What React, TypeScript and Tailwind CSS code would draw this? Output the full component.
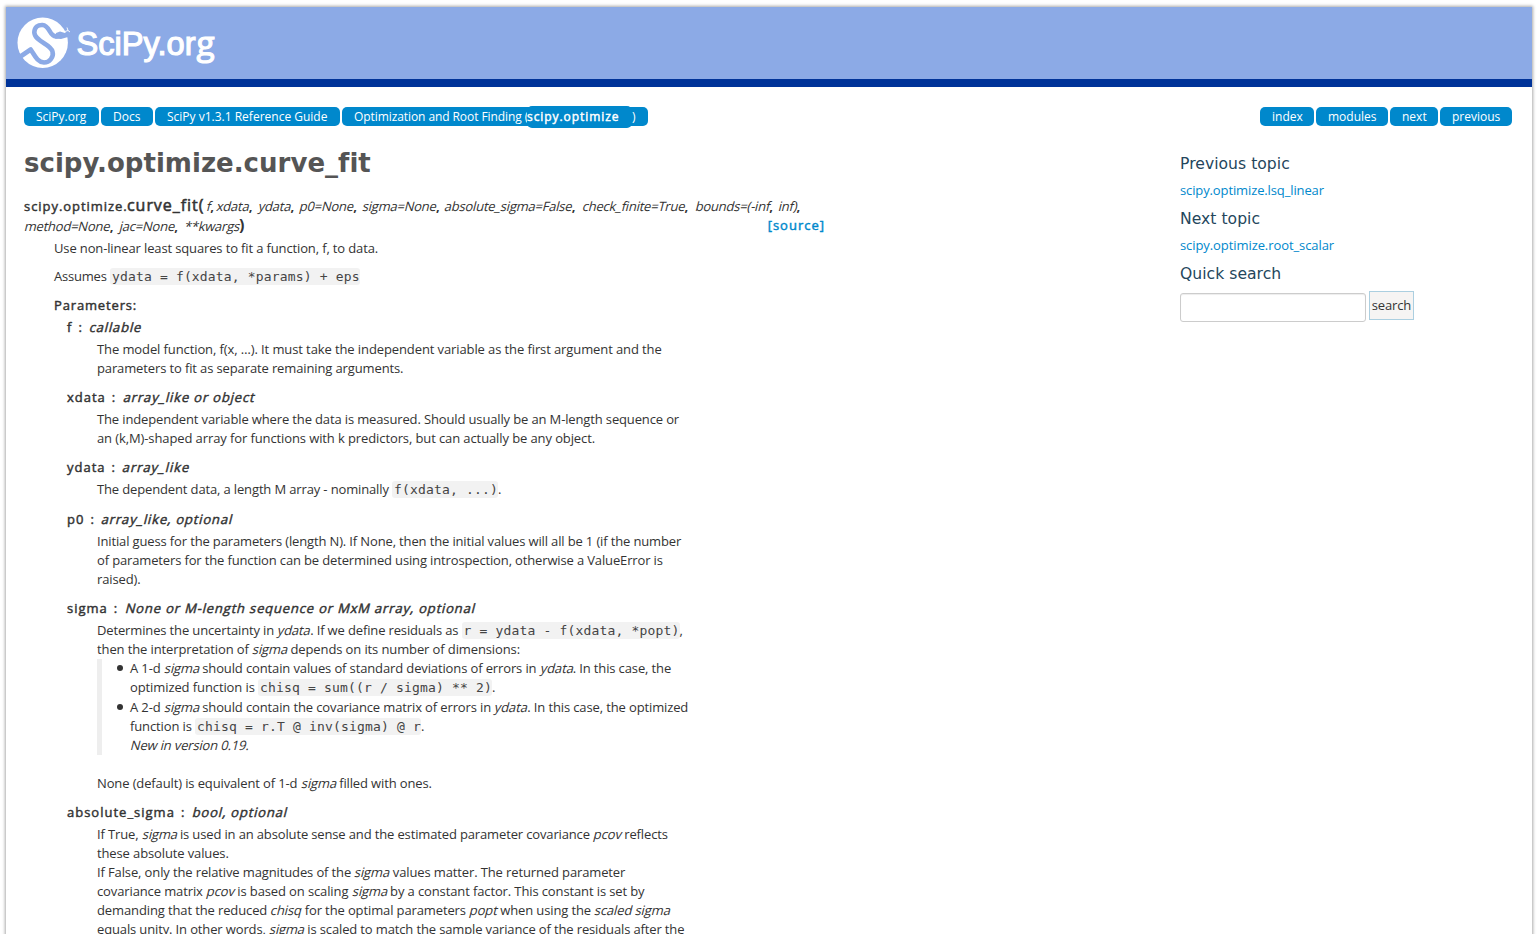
import React from "react";

const C = ({ children }: { children: React.ReactNode }) => (
  <code className="rounded-[3px] bg-[#f2f2f2] py-px pl-[2px] font-['DejaVu_Sans_Mono',monospace] text-[13px] tracking-[0.17px] text-[#444]">{children}</code>
);

const I = ({ children }: { children: React.ReactNode }) => (
  <em className="inline-block origin-[0_70%] -skew-x-[14deg] whitespace-pre not-italic">{children}</em>
);

const L = ({ children, s = -0.125 }: { children: React.ReactNode; s?: number }) => (
  <span className="block h-[19px] whitespace-nowrap" style={{ letterSpacing: `${s}px` }}>{children}</span>
);

const Term = ({ name, type, s = 0.83 }: { name: string; type: string; s?: number }) => (
  <dt className="h-[23px] whitespace-pre pl-[13px] leading-[20px] tracking-[1px] [-webkit-text-stroke:0.45px_#333]">
    {name}
    <span className="pl-[6px]">: </span>
    <span className="pl-[2px]" style={{ letterSpacing: `${s}px` }}><I>{type}</I></span>
  </dt>
);

const Pill = ({ children, w }: { children: React.ReactNode; w: number }) => (
  <li className="h-[19px] whitespace-nowrap rounded-[5px] bg-[#0088cc] pl-3 text-[12px] leading-[19px] text-white" style={{ width: w }}>{children}</li>
);

const Param = ({ children, w, comma = true }: { children: React.ReactNode; w: number; comma?: boolean }) => (
  <span className="inline-block whitespace-nowrap tracking-[-0.22px]" style={{ width: w }}>
    <I>{children}</I>
    {comma && <b>,</b>}
  </span>
);

const H3 = ({ children }: { children: React.ReactNode }) => (
  <h3 className="font-['DejaVu_Sans',sans-serif] text-[15.6px] leading-[20px] tracking-[0.03px] text-[#24465c]">{children}</h3>
);

const Item = ({ children }: { children: React.ReactNode }) => (
  <li className="mb-px flex">
    <span className="mr-[7px] mt-[6px] size-[6px] shrink-0 rounded-full bg-[#333]" />
    <div>{children}</div>
  </li>
);

function Logo() {
  return (
    <svg width="220" height="72" viewBox="0 0 220 72" aria-label="SciPy.org">
      <circle cx="36.700" cy="35.700" r="25.200" fill="#fff" />
      <path d="M13 50.500 L24.700 42.500 C28.500 48 31 55 38 55.500 C43.500 55.500 48 50 46.500 44.500 C44.500 36.500 28.500 34.500 28.300 25.300 C28.500 20 32 17.800 36.500 18 C44 18.500 43 29 50 29.500 L54 28.500" fill="none" stroke="#8caae6" strokeWidth="4.600" strokeLinejoin="round" />
      <path d="M50 26 L54 24.500 L59 26 L63 23 L62 30 L55 32 L49 31.500 Z" fill="#8caae6" />
      <path d="M59 24.500 L62 23.500 M62 23.500 L61 20.500 M62 23.500 L64 25" fill="none" stroke="#fff" strokeWidth="0.900" />
      <g fill="#fff" stroke="#fff" fontFamily="Liberation Sans, sans-serif">
        <text x="70.500" y="48" fontSize="34" strokeWidth="1.200" textLength="119" lengthAdjust="spacingAndGlyphs">SciPy.or</text>
        <text x="190.500" y="48" fontSize="33.500" strokeWidth="1.100" fontFamily="Open Sans, sans-serif">g</text>
      </g>
    </svg>
  );
}

export default function App() {
  return (
    <div className="h-[934px] overflow-hidden bg-white pl-[6px] pr-[8px] pt-[7px] font-['Open_Sans',sans-serif] text-[13px] leading-[19px] text-[#333]">
      <div className="h-[960px] bg-white shadow-[0_0_3px_1px_#aaa]">
        <header className="h-[80px] border-b-8 border-[#003399] bg-[#8caae6]"><Logo /></header>
        <div className="flex justify-between pl-[18px] pr-[20px] pt-[20px]">
          <ul className="flex gap-[2px]">
            <Pill w={75}>SciPy.org</Pill>
            <Pill w={52}>Docs</Pill>
            <Pill w={185}>SciPy v1.3.1 Reference Guide</Pill>
            <Pill w={306}><span className="inline-block w-[173px] tracking-[-0.08px]">Optimization and Root Finding (</span><span className="-my-px inline-block h-[22px] w-[105px] rounded-[5px] bg-[#0088cc] align-top leading-[21px] tracking-[0.93px] [-webkit-text-stroke:0.45px_white]">scipy.optimize</span>)</Pill>
          </ul>
          <ul className="flex gap-[2px]">
            <Pill w={54}>index</Pill><Pill w={72}>modules</Pill><Pill w={48}>next</Pill><Pill w={72}>previous</Pill>
          </ul>
        </div>
        <div className="flex pl-[18px]">
          <main className="w-[1156px]">
            <h1 className="mt-[17px] h-[40px] font-['DejaVu_Sans',sans-serif] text-[26px] font-bold leading-[40px] tracking-[0.02px] text-[#555]">scipy.optimize.curve_fit</h1>
            <div className="mt-[13px] h-[43px] w-[801px] leading-[20px]">
              <div className="flex h-[20px]">
                <span className="w-[103px] tracking-[0.95px] [-webkit-text-stroke:0.45px_#333]">scipy.optimize.</span>
                <span className="w-[79px] text-[16px] leading-[18px] tracking-[0.95px] [-webkit-text-stroke:0.55px_#333]">curve_fit(</span>
                <Param w={10}>f</Param><Param w={42}>xdata</Param><Param w={41}>ydata</Param><Param w={63}>p0=None</Param><Param w={82}>sigma=None</Param><Param w={138}>absolute_sigma=False</Param><Param w={113}>check_finite=True</Param><Param w={83}>bounds=(-inf</Param><Param w={30}>inf)</Param>
              </div>
              <div className="flex h-[20px]">
                <Param w={95}>method=None</Param><Param w={65}>jac=None</Param><Param w={55} comma={false}>**kwargs</Param><b className="text-[16px] leading-[18px]">)</b>
                <a className="-mt-px ml-auto tracking-[1px] text-[#0088cc] [-webkit-text-stroke:0.45px_#0088cc]">[source]</a>
              </div>
            </div>
            <div className="pl-[30px]">
              <L s={-0.136}>Use non-linear least squares to fit a function, f, to data.</L>
              <div className="mt-[9px]"><L s={-0.2}>Assumes <C>ydata = f(xdata, *params) + eps</C></L></div>
              <div className="mt-[10px] h-[21px] tracking-[0.85px] [-webkit-text-stroke:0.45px_#333]">Parameters:</div>
              <dl>
                <Term name="f" type="callable" />
                <dd className="mb-[9px] pl-[43px]"><L s={-0.103}>The model function, f(x, …). It must take the independent variable as the first argument and the</L><L>parameters to fit as separate remaining arguments.</L></dd>
                <Term name="xdata" type="array_like or object" />
                <dd className="mb-[9px] pl-[43px]"><L s={-0.137}>The independent variable where the data is measured. Should usually be an M-length sequence or</L><L s={-0.105}>an (k,M)-shaped array for functions with k predictors, but can actually be any object.</L></dd>
                <Term name="ydata" type="array_like" s={0.95} />
                <dd className="mb-[10px] pl-[43px]"><L s={-0.14}>The dependent data, a length M array - nominally <C>f(xdata, ...)</C>.</L></dd>
                <Term name="p0" type="array_like, optional" />
                <dd className="mb-[9px] pl-[43px]"><L s={-0.14}>Initial guess for the parameters (length N). If None, then the initial values will all be 1 (if the number</L><L s={-0.143}>of parameters for the function can be determined using introspection, otherwise a ValueError is</L><L>raised).</L></dd>
                <Term name="sigma" type="None or M-length sequence or MxM array, optional" />
                <dd className="mb-[9px] pl-[43px]">
                  <L s={-0.14}>Determines the uncertainty in <I>ydata</I>. If we define residuals as <C>r = ydata - f(xdata, *popt)</C>,</L>
                  <L s={-0.115}>then the interpretation of <I>sigma</I> depends on its number of dimensions:</L>
                  <ul className="mb-[19px] h-[96px] border-l-[5px] border-[#eee] pl-[15px]">
                    <Item><L>A 1-d <I>sigma</I> should contain values of standard deviations of errors in <I>ydata</I>. In this case, the</L><L s={-0.1}>optimized function is <C>chisq = sum((r / sigma) ** 2)</C>.</L></Item>
                    <Item><L>A 2-d <I>sigma</I> should contain the covariance matrix of errors in <I>ydata</I>. In this case, the optimized</L><L>function is <C>chisq = r.T @ inv(sigma) @ r</C>.</L><L s={-0.17}><I>New in version 0.19.</I></L></Item>
                  </ul>
                  <L>None (default) is equivalent of 1-d <I>sigma</I> filled with ones.</L>
                </dd>
                <Term name="absolute_sigma" type="bool, optional" />
                <dd className="pl-[43px]">
                  <L s={-0.142}>If True, <I>sigma</I> is used in an absolute sense and the estimated parameter covariance <I>pcov</I> reflects</L><L>these absolute values.</L>
                  <L>If False, only the relative magnitudes of the <I>sigma</I> values matter. The returned parameter</L>
                  <L s={-0.118}>covariance matrix <I>pcov</I> is based on scaling <I>sigma</I> by a constant factor. This constant is set by</L>
                  <L s={-0.12}>demanding that the reduced <I>chisq</I> for the optimal parameters <I>popt</I> when using the <I>scaled sigma</I></L>
                  <L s={-0.135}>equals unity. In other words, <I>sigma</I> is scaled to match the sample variance of the residuals after the</L>
                </dd>
              </dl>
            </div>
          </main>
          <aside className="pt-[28px]">
            <H3>Previous topic</H3>
            <p className="mb-[9px] mt-[7px] tracking-[-0.12px] text-[#0088cc]">scipy.optimize.lsq_linear</p>
            <H3>Next topic</H3>
            <p className="mb-[9px] mt-[7px] tracking-[-0.08px] text-[#0088cc]">scipy.optimize.root_scalar</p>
            <H3>Quick search</H3>
            <form className="mt-[7px] flex gap-[3px]">
              <input className="mt-[2px] h-[29px] w-[186px] rounded-[3px] border border-[#ccc] shadow-[inset_0_1px_1px_rgba(0,0,0,0.075)]" />
              <button type="button" className="h-[29px] w-[45px] border border-[#accfe0] bg-[#f6f4f3] text-[13px] tracking-[-0.15px]">search</button>
            </form>
          </aside>
        </div>
      </div>
    </div>
  );
}
